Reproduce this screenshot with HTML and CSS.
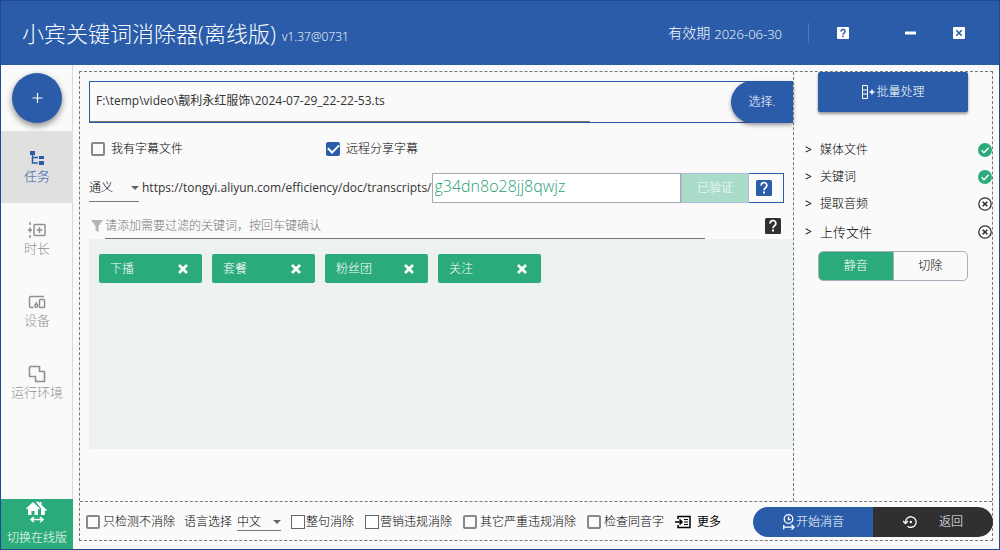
FILE: index.html
```html
<!DOCTYPE html>
<html lang="zh-CN">
<head>
<meta charset="utf-8">
<title>小宾关键词消除器</title>
<link rel="stylesheet" href="styles.css">
</head>
<body>
<div class="window">
  <header class="titlebar">
    <h1 class="title">小宾关键词消除器(离线版)</h1>
    <span class="version">v1.37@0731</span>
    <div class="expiry"><span class="expiry-label">有效期</span><span class="expiry-date">2026-06-30</span></div>
    <div class="window-buttons">
      <button class="icon-button" aria-label="帮助"><svg width="12" height="12" viewBox="0 0 12 12"><rect width="12" height="12" rx="1" fill="#fff"/><path d="M4 4.600a2 2 0 1 1 3 1.500Q6 6.700 6 7.800" fill="none" stroke="#2a5caa" stroke-width="1.500"/><rect x="5.200" y="8.600" width="1.600" height="1.500" fill="#2a5caa"/></svg></button>
      <button class="icon-button minimize" aria-label="最小化"><svg width="12" height="12" viewBox="0 0 12 12"><rect x="0" y="4.500" width="11" height="3" rx=".5" fill="#fff"/></svg></button>
      <button class="icon-button" aria-label="关闭"><svg width="12" height="12" viewBox="0 0 12 12"><rect width="12" height="12" rx="1" fill="#fff"/><path d="M3.300 3.300l5.400 5.400M8.700 3.300L3.300 8.700" stroke="#2a5caa" stroke-width="1.500"/></svg></button>
    </div>
  </header>
  <div class="body">
    <nav class="sidebar">
      <button class="fab" aria-label="新建"><svg width="12" height="12" viewBox="0 0 12 12"><path d="M6.500 1v10M1.500 6h10" stroke="#fff" stroke-width="1.200"/></svg></button>
      <button class="tab active"><svg width="16" height="16" viewBox="0 0 16 16" fill="currentColor"><path d="M1 1h5v4H1zM10 6h5v3h-5zM10 11h5v4h-5z"/><path d="M3.500 5v8H9M3.500 7.500H9" fill="none" stroke="currentColor" stroke-width="1.500"/></svg><span>任务</span></button>
      <button class="tab"><svg width="18" height="16" viewBox="0 0 18 16" fill="none" stroke="currentColor" stroke-width="1.500"><path d="M2 0v3M2 5.500v5M2 13v3M0 8h4"/><rect x="6" y="2.500" width="11" height="11" rx="1"/><path d="M11.500 5v6M8.500 8h6"/></svg><span>时长</span></button>
      <button class="tab"><svg width="18" height="16" viewBox="0 0 18 16" fill="none" stroke="currentColor" stroke-width="1.500"><path d="M16 2.500H3a1.500 1.500 0 0 0-1.500 1.500v8A1.500 1.500 0 0 0 3 13.500h2.500"/><rect x="11.500" y="5.500" width="5" height="8" rx=".8"/><circle cx="8.300" cy="11.800" r="1.500"/><path d="M8.300 10.300V8"/></svg><span>设备</span></button>
      <button class="tab"><svg width="18" height="18" viewBox="0 0 18 18" fill="none" stroke="currentColor" stroke-width="1.600" stroke-linejoin="round"><path d="M2 1.500h9.500v5h5v10H7.500v-5H1.500v-9z"/></svg><span>运行环境</span></button>
      <button class="switch"><svg width="24" height="24" viewBox="0 0 24 24" fill="#fff"><path d="M1 9.500L8 3l7 6.500-1 1-1-1V16H9.500v-4h-3v4H3V9.500l-1 1z"/><path d="M11 3l1.500-.5 2 1.500V3h2v3l5.500 5-1 1-1.200-1V16H16V9.500z"/><path d="M6.500 20.500h11M9 18l-3 2.500L9 23M15 18l3 2.500-3 2.500" fill="none" stroke="#fff" stroke-width="1.600"/></svg><span>切换在线版</span></button>
    </nav>
    <main class="content">
      <section class="task">
        <div class="file-row">
          <input class="file-path" aria-label="文件路径" value="F:\temp\video\靓利永红服饰\2024-07-29_22-22-53.ts">
          <button class="pick">选择.</button>
        </div>
        <div class="options">
          <label class="check"><input type="checkbox">我有字幕文件</label>
          <label class="check"><input type="checkbox" checked>远程分享字幕</label>
        </div>
        <div class="url-row">
          <span class="select provider"><select aria-label="字幕来源"><option>通义</option></select></span>
          <label class="url" for="code">https://tongyi.aliyun.com/efficiency/doc/transcripts/</label>
          <input class="code" id="code" value="g34dn8o28jj8qwjz">
          <button class="verified" disabled>已验证</button>
          <button class="url-help" aria-label="帮助"><svg width="16" height="16" viewBox="0 0 16 16"><rect width="16" height="16" rx="1.500" fill="#2a5caa"/><path d="M5.200 5.700a2.800 2.800 0 1 1 4.300 2Q8 8.800 8 10.200" fill="none" stroke="#fff" stroke-width="1.700"/><rect x="7" y="11.500" width="2" height="2" fill="#fff"/></svg></button>
        </div>
        <div class="filter-row">
          <svg width="16" height="14" viewBox="0 0 16 14"><path d="M2 1h12L9.500 7v6l-3-1.500V7z" fill="#b5b5b5"/></svg>
          <input class="filter" aria-label="关键词" placeholder="请添加需要过滤的关键词，按回车键确认">
          <button class="icon-button" aria-label="关键词帮助"><svg width="16" height="16" viewBox="0 0 16 16"><rect width="16" height="16" rx="1.500" fill="#303030"/><path d="M5.200 5.700a2.800 2.800 0 1 1 4.300 2Q8 8.800 8 10.200" fill="none" stroke="#fff" stroke-width="1.700"/><rect x="7" y="11.500" width="2" height="2" fill="#fff"/></svg></button>
        </div>
        <div class="keywords">
          <div class="chip">下播<button aria-label="删除下播"><svg width="12" height="12" viewBox="0 0 12 12"><path d="M2 2l8 8M10 2l-8 8" stroke="#fff" stroke-width="2.700"/></svg></button></div>
          <div class="chip">套餐<button aria-label="删除套餐"><svg width="12" height="12" viewBox="0 0 12 12"><path d="M2 2l8 8M10 2l-8 8" stroke="#fff" stroke-width="2.700"/></svg></button></div>
          <div class="chip">粉丝团<button aria-label="删除粉丝团"><svg width="12" height="12" viewBox="0 0 12 12"><path d="M2 2l8 8M10 2l-8 8" stroke="#fff" stroke-width="2.700"/></svg></button></div>
          <div class="chip">关注<button aria-label="删除关注"><svg width="12" height="12" viewBox="0 0 12 12"><path d="M2 2l8 8M10 2l-8 8" stroke="#fff" stroke-width="2.700"/></svg></button></div>
        </div>
      </section>
      <aside class="status">
        <button class="batch"><svg width="15" height="14" viewBox="0 0 15 14" fill="none" stroke="#fff"><path d="M1.500.5h5v13h-5zM1.500 5h5M1.500 9h5"/><path d="M8.500 7h5M11 4.500v5" stroke-width="1.500"/></svg>批量处理</button>
        <ul class="steps">
          <li><span class="arrow">&gt;</span>媒体文件<svg width="14" height="14" viewBox="0 0 14 14"><circle cx="7" cy="7" r="7" fill="#2bab7b"/><path d="M3.500 7.200l2.500 2.500 4.700-5" fill="none" stroke="#fff" stroke-width="1.400"/></svg></li>
          <li><span class="arrow">&gt;</span>关键词<svg width="14" height="14" viewBox="0 0 14 14"><circle cx="7" cy="7" r="7" fill="#2bab7b"/><path d="M3.500 7.200l2.500 2.500 4.700-5" fill="none" stroke="#fff" stroke-width="1.400"/></svg></li>
          <li><span class="arrow">&gt;</span>提取音频<svg width="14" height="14" viewBox="0 0 14 14"><circle cx="7" cy="7" r="6.200" fill="none" stroke="#303030" stroke-width="1.300"/><path d="M4.700 4.700l4.600 4.600M9.300 4.700L4.700 9.300" stroke="#303030" stroke-width="1.600"/></svg></li>
          <li class="current"><span class="arrow">&gt;</span>上传文件<svg width="14" height="14" viewBox="0 0 14 14"><circle cx="7" cy="7" r="6.200" fill="none" stroke="#303030" stroke-width="1.300"/><path d="M4.700 4.700l4.600 4.600M9.300 4.700L4.700 9.300" stroke="#303030" stroke-width="1.600"/></svg></li>
        </ul>
        <div class="mode"><button class="selected">静音</button><button>切除</button></div>
      </aside>
      <footer class="toolbar">
        <label class="check"><input type="checkbox">只检测不消除</label>
        <label class="language">语言选择<span class="select"><select><option>中文</option></select></span></label>
        <label class="check plain"><input type="checkbox">整句消除</label>
        <label class="check plain"><input type="checkbox">营销违规消除</label>
        <label class="check"><input type="checkbox">其它严重违规消除</label>
        <label class="check"><input type="checkbox">检查同音字</label>
        <button class="more"><svg width="16" height="14" viewBox="0 0 16 14" fill="none" stroke="#000" stroke-width="1.500"><path d="M3 4V1.500h12v11H3V10"/><path d="M0 7h6.500M4.500 4.500L7 7 4.500 9.500"/><path d="M9 4.500h4M9 7h4M9 9.500h4" stroke-width="1"/></svg>更多</button>
        <div class="actions">
          <button class="start"><svg width="14" height="16" viewBox="0 0 14 16" fill="none" stroke="#fff" stroke-width="1.300"><circle cx="6.500" cy="5" r="4.300"/><path d="M6.500 2.500V5.500H8.500"/><path d="M1.700 11v4.500M1.700 13.200h10M9.500 10.800L12 13.200l-2.500 2.400"/></svg>开始消音</button>
          <button class="back"><svg width="14" height="14" viewBox="0 0 14 14" fill="none" stroke="#fff" stroke-width="1.300"><path d="M2.500 7.500A5.300 5.300 0 1 1 4.500 11.200M0 6l2.500 2.500L5 6"/><circle cx="7.800" cy="7" r="1.200" fill="#fff" stroke="none"/></svg>返回</button>
        </div>
      </footer>
    </main>
  </div>
</div>
</body>
</html>
```
FILE: styles.css
```css
* { box-sizing: border-box; }

body {
  margin: 0;
  font: 300 12px/16px "Open Sans", "Noto Sans CJK SC", sans-serif;
  color: #000;
}

button, input, select {
  margin: 0;
  padding: 0;
  border: 0;
  border-radius: 0;
  background: none;
  font: inherit;
  color: inherit;
}

svg { flex: none; display: block; }

.window {
  display: flex;
  flex-direction: column;
  min-height: 100vh;
  border: 1px solid #1f4a90;
  background: #fafafa;
}

.titlebar {
  display: flex;
  align-items: center;
  height: 64px;
  padding: 0 28px 0 21px;
  background: #2a5caa;
  color: #fff;
}
.title { margin: 0; font-size: 22px; line-height: 32px; font-weight: 300; }
.version { margin: 8px 0 0 6px; }
.expiry {
  display: flex;
  align-items: center;
  gap: 4px;
  height: 20px;
  margin-left: auto;
  padding-right: 26px;
  border-right: 1px solid #4a78bd;
}
.expiry-label { font-size: 14px; }
.expiry-date { padding-top: 2px; font-size: 13px; }
.window-buttons { display: flex; margin-left: 22px; }
.window-buttons .icon-button { width: 24px; }
.window-buttons .minimize { margin: 0 24px 0 44px; }
.icon-button { display: flex; align-items: center; justify-content: center; }

.body { display: flex; flex: 1; }

.sidebar {
  display: flex;
  flex-direction: column;
  flex: none;
  width: 72px;
  border-right: 1px solid #d8d8d8;
}
.fab {
  display: flex;
  align-items: center;
  justify-content: center;
  width: 50px;
  height: 50px;
  margin: 8px 0 8px 11px;
  border-radius: 50%;
  background: #2a5caa;
  box-shadow: 0 3px 6px rgba(0, 0, 0, .45);
}
.tab {
  display: flex;
  flex-direction: column;
  align-items: center;
  justify-content: center;
  gap: 1px;
  height: 72px;
  margin-right: -1px;
  padding-bottom: 2px;
  font-size: 13px;
  color: #909090;
}
.tab svg { height: 18px; }
.tab.active { background: #e0e0e0; color: #2a5caa; }
.switch {
  display: flex;
  flex-direction: column;
  align-items: center;
  justify-content: space-between;
  height: 50px;
  margin: auto -1px 0 0;
  padding-bottom: 3px;
  background: #2bab7b;
  color: #fff;
}

.content {
  display: grid;
  grid-template: 1fr auto / 1fr 199px;
  flex: 1;
  margin: 6px 6px 8px;
  border: 1px dashed #777;
}

.task {
  display: flex;
  flex-direction: column;
  min-width: 0;
  padding: 9px 0 0 9px;
}
.file-row {
  display: flex;
  height: 42px;
  border: 1px solid #2a5caa;
}
.file-path {
  flex: 1;
  padding: 0 6px 2px;
  border-bottom: 1px solid #777;
  font-weight: 400;
  color: #333;
}
.pick {
  width: 62px;
  margin: -1px -1px -1px 141px;
  border-radius: 21px 0 0 21px;
  background: #2a5caa;
  box-shadow: 0 2px 4px rgba(0, 0, 0, .4);
  color: #fff;
}

.options {
  display: grid;
  grid-template-columns: 235px auto;
  justify-content: start;
  margin-top: 18px;
  padding-left: 2px;
}
.check { display: flex; align-items: center; gap: 3px; }
.options .check { gap: 6px; }
.check input {
  appearance: none;
  display: grid;
  place-items: center;
  width: 14px;
  height: 14px;
  border: 2px solid #888;
  border-radius: 2px;
}
.check input:checked { border-color: #2a5caa; background: #2a5caa; }
.check input:checked::after {
  content: "";
  width: 9px;
  height: 5px;
  margin-bottom: 3px;
  border: solid #fff;
  border-width: 0 0 2px 2px;
  transform: rotate(-45deg);
}
.plain input { border-width: 1px; border-color: #666; border-radius: 0; background: #fff; }
.check.plain { gap: 1px; }

.url-row { display: flex; align-items: center; height: 30px; margin: 16px 9px 0 0; }
.select { display: flex; align-items: center; border-bottom: 1px solid #777; }
.select::after {
  content: "";
  border: 4px solid transparent;
  border-top-color: #666;
  border-bottom: 0;
}
.select select { flex: 1; appearance: none; }
.provider { width: 50px; height: 27px; }
.url { margin-left: 3px; font-weight: 400; color: #333; white-space: nowrap; }
.code {
  flex: 1;
  min-width: 0;
  height: 30px;
  padding: 0 2px 4px;
  border: 1px solid #aaa;
  background: #fff;
  font-size: 16px;
  color: #1fa070;
}
.verified {
  width: 68px;
  height: 30px;
  border: 1px solid #a8bddd;
  background: #aadcca;
  color: #fff;
}
.url-help {
  display: grid;
  place-items: center;
  width: 35px;
  height: 30px;
  padding-right: 4px;
  border: 1px solid #2a5caa;
  border-left: 0;
}

.filter-row { display: flex; align-items: center; height: 26px; margin-top: 10px; padding-right: 12px; }
.filter {
  flex: 1;
  height: 26px;
  margin-right: 60px;
  border-bottom: 1px solid #777;
}
.filter::placeholder { color: #777; opacity: 1; }

.keywords {
  display: flex;
  flex-wrap: wrap;
  align-content: flex-start;
  gap: 10px;
  flex: 1;
  margin-bottom: 52px;
  padding: 15px 10px;
  background: #edf1f0;
}
.chip {
  display: flex;
  align-items: center;
  justify-content: space-between;
  width: 103px;
  height: 29px;
  padding: 0 13px 0 11px;
  border-radius: 2px;
  background: #2bab7b;
  color: #fff;
}

.status { padding-left: 11px; border-left: 1px dashed #777; }
.batch {
  display: flex;
  align-items: center;
  justify-content: center;
  width: 150px;
  height: 40px;
  margin-left: 13px;
  border-radius: 2px;
  background: #2a5caa;
  box-shadow: 0 2px 3px rgba(0, 0, 0, .4);
  color: #fff;
}
.steps { margin: 24px 0 0; padding: 0; list-style: none; }
.steps li { display: flex; align-items: center; height: 27px; }
.steps .current { height: 29px; font-size: 13px; }
.steps svg { margin-left: auto; }
.arrow { width: 15px; font-size: 12px; font-weight: 400; }
.mode {
  display: flex;
  width: 150px;
  height: 30px;
  margin: 5px 0 0 13px;
  border: 1px solid #aaafbb;
  border-radius: 5px;
  overflow: hidden;
}
.mode button { flex: 1; }
.mode .selected { border-right: 1px solid #aaafbb; background: #2bab7b; color: #fff; }

.toolbar {
  grid-column: 1 / -1;
  display: flex;
  align-items: center;
  gap: 11px;
  min-height: 39px;
  padding: 2px 0 0 6px;
  border-top: 1px dashed #777;
  white-space: nowrap;
}
.language { display: flex; align-items: center; gap: 5px; margin: 0 -1px 0 -2px; }
.language .select { width: 44px; }
.more { display: flex; align-items: center; gap: 6px; color: #000; font-weight: 400; }
.actions { display: flex; margin: 0 -1px 0 auto; border-radius: 15px; overflow: hidden; }
.actions button {
  display: flex;
  align-items: center;
  justify-content: center;
  width: 120px;
  height: 30px;
  color: #fff;
}
.start { background: #2a5caa; }
.actions .back { gap: 22px; background: #303030; }
```
